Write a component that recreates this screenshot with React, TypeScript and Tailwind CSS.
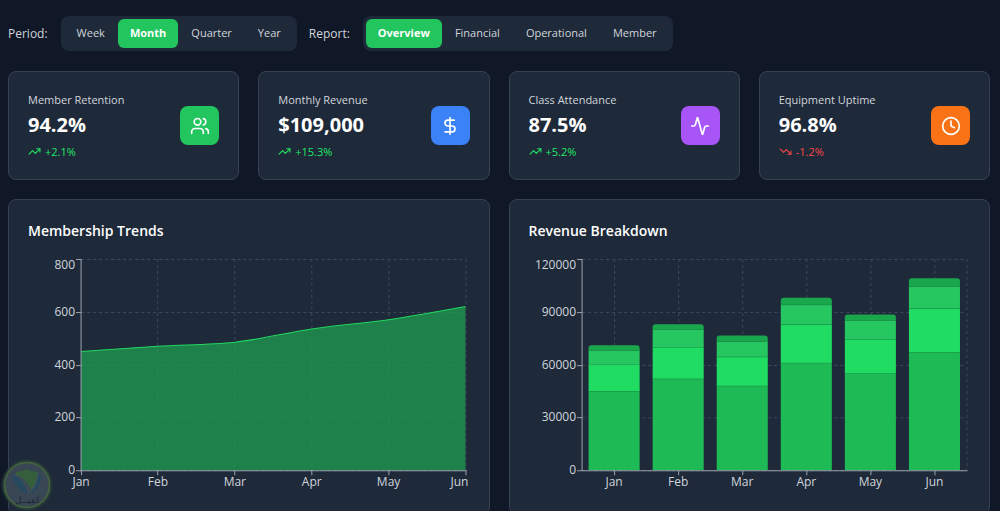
import { useState } from "react"
import clsx from "clsx"
import {
  Activity,
  Clock,
  DollarSign,
  TrendingDown,
  TrendingUp,
  Users,
  type LucideIcon,
} from "lucide-react"

const MONTHS = ["Jan", "Feb", "Mar", "Apr", "May", "Jun"]

const members = [450, 470, 485, 535, 570, 620]

const revenue = [
  [45000, 15000, 8000, 3000],
  [52000, 18000, 10000, 3000],
  [48000, 16500, 8800, 3200],
  [61000, 22000, 11000, 4000],
  [55000, 19500, 10500, 3500],
  [67000, 25000, 12500, 4500],
]

const BAR_FILLS = ["fill-[#1eba55]", "fill-[#20dc62]", "fill-[#26c760]", "fill-[#1aa64c]"]

// plot area inside the 441x240 chart
const LEFT = 53
const RIGHT = 437
const TOP = 4
const BOTTOM = 215

type SegmentedProps = {
  label: string
  options: string[]
  initial: string
}

const Segmented = ({ label, options, initial }: SegmentedProps) => {
  const [active, setActive] = useState(initial)

  return (
    <div className="flex items-center gap-[13px]">
      <span className="text-xs text-gray-300">{label}:</span>
      <div role="group" aria-label={label} className="flex rounded-lg bg-gray-800 p-[3px]">
        {options.map((option) => (
          <button
            key={option}
            type="button"
            aria-pressed={option === active}
            onClick={() => setActive(option)}
            className={clsx(
              "h-[29px] rounded-md text-[11px]",
              option === active
                ? "bg-[#22c55e] px-3 font-bold text-white"
                : "px-[13px] font-medium text-gray-300 hover:text-white"
            )}
          >
            {option}
          </button>
        ))}
      </div>
    </div>
  )
}

type StatProps = {
  title: string
  value: string
  change: string
  icon: LucideIcon
  color: string
}

const stats: StatProps[] = [
  { title: "Member Retention", value: "94.2%", change: "+2.1%", icon: Users, color: "bg-[#22c55e]" },
  { title: "Monthly Revenue", value: "$109,000", change: "+15.3%", icon: DollarSign, color: "bg-[#3b82f6]" },
  { title: "Class Attendance", value: "87.5%", change: "+5.2%", icon: Activity, color: "bg-[#a855f7]" },
  { title: "Equipment Uptime", value: "96.8%", change: "-1.2%", icon: Clock, color: "bg-[#f97316]" },
]

const StatCard = ({ title, value, change, icon: Icon, color }: StatProps) => {
  const down = change.startsWith("-")
  const Trend = down ? TrendingDown : TrendingUp

  return (
    <div className="flex items-center justify-between rounded-lg border border-gray-700 bg-gray-800 p-[19px]">
      <div>
        <p className="text-[11px] leading-[18px] font-medium text-gray-300">{title}</p>
        <p className="mt-0.5 text-xl leading-7 font-bold text-white">{value}</p>
        <p
          className={clsx(
            "mt-1 flex items-center gap-1 text-[11px] leading-[17px] font-medium",
            down ? "text-[#f84848]" : "text-[#22e867]"
          )}
        >
          <Trend size={13} />
          {change}
        </p>
      </div>
      <div className={clsx("flex size-[39px] items-center justify-center rounded-lg text-white", color)}>
        <Icon size={20} />
      </div>
    </div>
  )
}

type AxesProps = {
  max: number
  step: number
  xs: number[]
  labelXs?: number[]
}

const yTicks = (max: number, step: number) =>
  Array.from({ length: max / step + 1 }, (_, i) => i * step)

const scaleY = (value: number, max: number) => BOTTOM - (value / max) * (BOTTOM - TOP)

const Grid = ({ max, step, xs }: AxesProps) => (
  <g className="stroke-[#3d4959]" strokeDasharray="3 3">
    {yTicks(max, step).map((v) => (
      <line key={v} x1={LEFT} x2={RIGHT} y1={Math.round(scaleY(v, max)) + 0.5} y2={Math.round(scaleY(v, max)) + 0.5} />
    ))}
    {[...new Set([...xs, RIGHT])]
      .filter((x) => x > LEFT)
      .map((x) => (
        <line key={x} x1={Math.floor(x) + 0.5} x2={Math.floor(x) + 0.5} y1={TOP} y2={BOTTOM} />
      ))}
  </g>
)

const Axes = ({ max, step, xs, labelXs = xs }: AxesProps) => (
  <>
    <g className="fill-none stroke-[#9ca3af]">
      <path d={`M${LEFT} ${TOP}V${BOTTOM + 0.5}H${RIGHT + 1}`} />
      {yTicks(max, step).map((v) => (
        <path key={v} d={`M${LEFT - 5} ${Math.round(scaleY(v, max)) + 0.5}h5`} />
      ))}
      {xs.map((x) => (
        <path key={x} d={`M${Math.floor(x) + 0.5} ${BOTTOM}v5`} />
      ))}
    </g>
    <g className="fill-gray-300 text-xs">
      {yTicks(max, step).map((v) => (
        <text key={v} x={LEFT - 6} y={Math.max(scaleY(v, max), 10) + 4} textAnchor="end">
          {v}
        </text>
      ))}
      {labelXs.map((x, i) => (
        <text key={x} x={x} y={BOTTOM + 16} textAnchor="middle">
          {MONTHS[i]}
        </text>
      ))}
    </g>
  </>
)

// monotone cubic through evenly spaced, rising points
const monotonePath = (xs: number[], ys: number[]) => {
  const h = xs[1] - xs[0]
  const slopes = ys.slice(1).map((y, i) => (y - ys[i]) / h)
  const inner = slopes.slice(1).map((s, i) => {
    const prev = slopes[i]
    const size = Math.min(Math.abs(prev), Math.abs(s), Math.abs(prev + s) / 4)
    return (Math.sign(prev) + Math.sign(s)) * size
  })
  const first = (3 * slopes[0] - inner[0]) / 2
  const last = (3 * slopes[slopes.length - 1] - inner[inner.length - 1]) / 2
  const t = [first, ...inner, last]

  return xs.slice(1).reduce(
    (d, x, i) =>
      `${d}C${xs[i] + h / 3} ${ys[i] + (t[i] * h) / 3} ${x - h / 3} ${ys[i + 1] - (t[i + 1] * h) / 3} ${x} ${ys[i + 1]}`,
    `M${xs[0]} ${ys[0]}`
  )
}

const MembershipChart = () => {
  const xs = MONTHS.map((_, i) => LEFT + (i * (RIGHT - LEFT)) / 5)
  const line = monotonePath(xs, members.map((m) => scaleY(m, 800)))

  return (
    <svg viewBox="0 0 441 240" className="w-full" role="img" aria-label="Membership Trends">
      <Grid max={800} step={200} xs={xs} />
      <path d={`${line}V${BOTTOM}H${LEFT}Z`} className="fill-[#1f9e50] opacity-75" />
      <path d={line} className="fill-none stroke-[#22d860]" />
      <Axes max={800} step={200} xs={xs} labelXs={[...xs.slice(0, 5), RIGHT - 6]} />
    </svg>
  )
}

const RevenueChart = () => {
  const band = (RIGHT - LEFT) / 6
  const xs = MONTHS.map((_, i) => LEFT + band * (i + 0.5))

  return (
    <svg viewBox="0 0 441 240" className="w-full" role="img" aria-label="Revenue Breakdown">
      <Grid max={120000} step={30000} xs={xs} />
      {revenue.map((parts, month) => {
        const x = xs[month] - 25.5
        let total = 0
        return parts.map((part, i) => {
          const bottom = scaleY(total, 120000)
          total += part
          const top = scaleY(total, 120000)
          if (i === parts.length - 1) {
            return (
              <path
                key={i}
                d={`M${x} ${bottom}V${top + 3}q0 -3 3 -3h45q3 0 3 3V${bottom}Z`}
                className={BAR_FILLS[i]}
              />
            )
          }
          return (
            <g key={i}>
              <rect x={x} y={top} width={51} height={bottom - top} className={BAR_FILLS[i]} />
              <path d={`M${x} ${top}h51`} className="stroke-[#178a42]" />
            </g>
          )
        })
      })}
      <Axes max={120000} step={30000} xs={xs} />
    </svg>
  )
}

const ChartCard = ({ title, children }: { title: string; children: React.ReactNode }) => (
  <section className="rounded-lg border border-gray-700 bg-gray-800 p-[19px]">
    <h2 className="mb-3 text-sm leading-6 font-semibold text-white">{title}</h2>
    {children}
  </section>
)

const Badge = () => (
  <svg viewBox="0 0 54 54" className="fixed bottom-0 left-0 size-[54px]" aria-hidden="true">
    <circle cx="27" cy="28" r="25.5" className="fill-[#2b4238] opacity-60" />
    <circle cx="27" cy="28" r="22.5" className="fill-[#394654] stroke-[#41603f]" strokeWidth="2" />
    <path d="M16 15q6 0 11-3q5 3 11 3l-1 4q-1 9-6 14Q26 21 16 18Z" className="fill-[#355f3a]" />
    <path d="M12 17q12 5 16 20q-15-6-16-20Z" className="fill-[#26495f]" />
    <path d="M41 17q1 15-12 20q7-6 9-19Z" className="fill-[#26495f]" />
    <path d="M14 17q12 5 15 19" className="fill-none stroke-[#465361]" />
    <path d="M38 16q-1 12-8 19" className="fill-none stroke-[#465361]" />
    <text x="27" y="46" textAnchor="middle" className="fill-[#1b2836] text-[9px]">
      كفيــل
    </text>
  </svg>
)

export default function App() {
  return (
    <main className="min-h-screen bg-gray-900 pt-4 pr-[10px] pb-5 pl-2 font-['Open_Sans','Noto_Sans',sans-serif]">
      <div className="flex flex-wrap gap-x-3 gap-y-3">
        <Segmented label="Period" options={["Week", "Month", "Quarter", "Year"]} initial="Month" />
        <Segmented
          label="Report"
          options={["Overview", "Financial", "Operational", "Member"]}
          initial="Overview"
        />
      </div>

      <div className="mt-5 grid grid-cols-2 gap-[19px] md:grid-cols-4">
        {stats.map((stat) => (
          <StatCard key={stat.title} {...stat} />
        ))}
      </div>

      <div className="mt-[19px] grid gap-[19px] md:grid-cols-2">
        <ChartCard title="Membership Trends">
          <MembershipChart />
        </ChartCard>
        <ChartCard title="Revenue Breakdown">
          <RevenueChart />
        </ChartCard>
      </div>

      <Badge />
    </main>
  )
}
